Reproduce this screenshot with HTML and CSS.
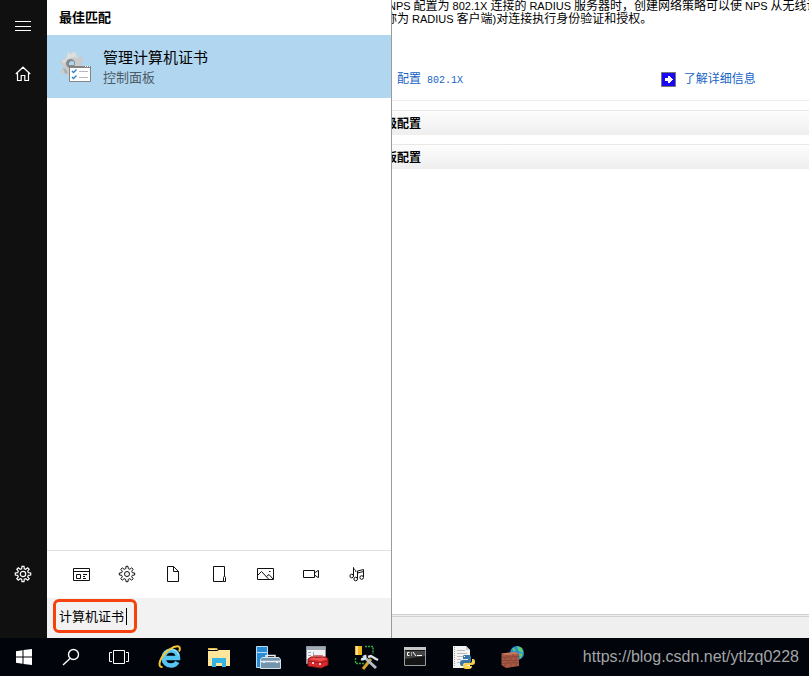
FILE: index.html
```html
<!DOCTYPE html>
<html lang="zh-CN">
<head>
<meta charset="utf-8">
<title>计算机证书</title>
<link rel="stylesheet" href="styles.css">
</head>
<body>
<div class="desktop">
  <section class="start" aria-label="搜索">
    <nav class="rail">
      <button type="button" aria-label="菜单"><svg width="16" height="16" viewBox="0 0 16 16"><path d="M0 3.500h16M0 8.500h16M0 12.500h16"/></svg></button>
      <button type="button" aria-label="主页"><svg width="16" height="16" viewBox="0 0 16 16"><path d="M.8 8 8 1.200 15.200 8M2.500 7v7.500h3.700V9.500h3.600v5h3.700V7"/></svg></button>
      <button type="button" class="settings" aria-label="设置"><svg width="18" height="18" viewBox="0 0 18 18"><path d="M7.7 3.700 8 1.300h2l.3 2.400 1.500.6 1.900-1.500 1.500 1.500-1.500 1.900.6 1.500 2.400.3v2l-2.400.3-.6 1.500 1.500 1.900-1.500 1.500-1.900-1.500-1.500.6-.3 2.400H8l-.3-2.400-1.500-.6-1.900 1.500-1.500-1.500 1.500-1.900-.6-1.500-2.400-.3V8l2.400-.3.6-1.500-1.500-1.900 1.500-1.500 1.900 1.500z"/><circle cx="9" cy="9" r="2.700"/></svg></button>
    </nav>
    <div class="panel">
      <h2>最佳匹配</h2>
      <a class="result" href="#">
        <svg width="32" height="32" viewBox="0 0 32 32">
          <path fill="#c9cbcd" d="m8 1 3 2 2-2 3 1 .5 3 3 1.500 3-.5 1 3-2 2.500.5 3 2.500 2-1.500 3-3 .5-2 2.500-10 2-3-2-3 .5-1.500-3L3 17l-.5-3L0 12l1.500-3 3-.5L6.500 6z"/>
          <path fill="#dcdddd" d="m8 1 3 2 2-2 3 1 .5 3 2 2-5-1-5 2-2 3-4 1 0-3 3-.5L6.500 6z"/>
          <path fill="#acafb2" d="M3 17l3 1 2 4-3 .5zM14 21l8-4-1 5z"/>
          <circle cx="10.500" cy="12.500" r="4.500" fill="#85898d"/><path fill="#b1d6f0" d="M9 14a3 3 0 0 1 5-3v3H9z"/>
          <path fill="#fff" stroke="#858585" d="M9.500 15.500h21v15h-21z"/><path stroke="#858585" stroke-width="2" d="M9 16h22"/><path stroke="#fff" d="M25 15.500h1m1 0h1m1 0h1"/>
          <path fill="none" stroke="#3183c8" stroke-width="1.400" d="m12 20 1.500 1.500 3-3M12 26l1.500 1.500 3-3"/>
          <path stroke="#b8b8b8" d="M19 20.500h9M19 26.500h9"/>
        </svg>
        <span class="result-text"><strong>管理计算机证书</strong><small>控制面板</small></span>
      </a>
      <div class="filters">
        <button type="button" aria-label="应用"><svg width="17" height="16" viewBox="0 0 17 16"><path d="M.5 2.500h16v12H.5zM.5 5.500h16M3.500 8.500h4v4h-4zM10 8.500h4M10 10.500h2M10 12.500h3"/></svg></button>
        <button type="button" aria-label="设置"><svg width="18" height="18" viewBox="0 0 18 18"><path d="M7.7 3.700 8 1.300h2l.3 2.400 1.500.6 1.900-1.500 1.500 1.500-1.500 1.900.6 1.500 2.400.3v2l-2.400.3-.6 1.500 1.500 1.900-1.500 1.500-1.900-1.500-1.500.6-.3 2.400H8l-.3-2.400-1.500-.6-1.900 1.500-1.500-1.500 1.500-1.900-.6-1.500-2.400-.3V8l2.400-.3.6-1.500-1.500-1.900 1.500-1.500 1.900 1.500z"/><circle cx="9" cy="9" r="2.500"/></svg></button>
        <button type="button" aria-label="文档"><svg width="14" height="16" viewBox="0 0 14 16"><path d="M1.500.5h6l5 5v10h-11zM7.500.5v5h5"/></svg></button>
        <button type="button" aria-label="文件夹"><svg width="14" height="16" viewBox="0 0 14 16"><path d="M12.500 10V.5H1.500v15h10M11.500 15.500v-4l1-1.500 1 1.500v4z"/></svg></button>
        <button type="button" aria-label="照片"><svg width="17" height="14" viewBox="0 0 17 14"><path d="M.5 1.500h16v11H.5zM.5 8.500l4-4 7.500 8M9.500 9.500 12 7.500l4 4.500M12 4.500h1.500"/></svg></button>
        <button type="button" aria-label="视频"><svg width="18" height="12" viewBox="0 0 18 12"><path d="M1.500 2.500h11v7h-11zM12.500 5l3.500-2.500h.5v7H16L12.500 7"/></svg></button>
        <button type="button" aria-label="音乐"><svg width="16" height="16" viewBox="0 0 16 16"><path d="M4.500 10V1.500c0 2 2.500 2 2.500 4.500M8.500 13V5l6-1.500V11M8.500 7l6-1.500"/><circle cx="2.700" cy="10" r="1.800"/><circle cx="6.700" cy="13" r="1.800"/><circle cx="12.700" cy="11.500" r="1.800"/></svg></button>
      </div>
      <div class="search">
        <label class="search-box"><input type="text" aria-label="搜索" value="计算机证书"><span class="caret"></span></label>
      </div>
    </div>
  </section>

  <main class="console">
    <p>将 <span>NPS</span> 配置为 <span>802.1X</span> 连接的 <span>RADIUS</span> 服务器时，创建网络策略可以使 <span>NPS</span> 从无线访<br>也称为 <span>RADIUS</span> 客户端<span>)</span>对连接执行身份验证和授权。</p>
    <div class="links">
      <a href="#">配置<span class="mono"> 802.1X</span></a>
      <a class="more" href="#"><svg width="15" height="15" viewBox="0 0 15 15"><path fill="#1808f4" stroke="#777" d="M.5.5h14v14H.5z"/><path fill="#fff" d="M4 6h3V4h2v1h1v1h1v1h1v1h-1v1h-1v1H9v1H7V9H4z"/></svg>了解详细信息</a>
    </div>
    <h3>高级配置</h3>
    <h3>模板配置</h3>
    <div class="status"></div>
  </main>
</div>

<footer class="taskbar">
  <button type="button" class="system" aria-label="开始"><svg width="16" height="16" viewBox="0 0 16 16"><path fill="#fff" d="M0 2.200 6.500 1.300V7.500H0zM7.500 1.100 16 0v7.500H7.500zM0 8.500h6.500v6.200L0 13.800zM7.500 8.500H16V16l-8.500-1.100z"/></svg></button>
  <button type="button" class="system" aria-label="搜索"><svg width="18" height="18" viewBox="0 0 18 18"><g fill="none" stroke="#fff" stroke-width="1.400"><circle cx="11.500" cy="6.500" r="5"/><path d="m8 10.500-7 6.500"/></g></svg></button>
  <button type="button" class="system" aria-label="任务视图"><svg width="20" height="16" viewBox="0 0 20 16"><path fill="none" stroke="#fff" d="M4.500 1.500h11v13h-11zM3 3.500H.5v9H3M17 3.500h2.500v9H17"/></svg></button>
  <div class="apps">
    <button type="button" aria-label="Internet Explorer"><svg width="24" height="24" viewBox="0 0 24 24"><path fill="none" stroke="#55c6f3" stroke-width="4.500" d="M5.500 13H20c0-5-3-7.500-7-7.500s-7.500 3-7.500 7.500 3.200 7.500 7.500 7.500c3 0 5-1 6.300-3.500"/><path fill="none" stroke="#b9eafc" d="M5 11c1-4 4-6.500 8-6.500s7 2 7.500 6"/><path fill="none" stroke="#f5c52b" stroke-width="2" d="M4.500 22C1 22.500.5 18 3.500 13 7.500 6 16 .5 20.500 1.500c2 .5 1.500 3 .5 5"/></svg></button>
    <button type="button" aria-label="文件资源管理器"><svg width="24" height="24" viewBox="0 0 24 24"><path fill="#e8b84b" d="M1 3h9l1 2H1z"/><path fill="#ffe69a" d="M1 6h9l2-1h11v16H1z"/><path fill="#fff2c7" d="M3 4h5v1H3z"/><path fill="#36b5e5" d="M5 13h14v9h-4v-4H9v4H5z"/></svg></button>
    <button type="button" aria-label="服务器管理器"><svg width="26" height="26" viewBox="0 0 26 26"><path fill="#278bd5" stroke="#b8dcf3" d="M1.500 2.500h11v21h-11z"/><path stroke="#b8dcf3" d="M2 8.500h10"/><path fill="#7495ae" stroke="#d5e0e7" d="M5.500 15.500 7 13.500h17l1.500 2v9h-20z"/><path fill="none" stroke="#e7edf1" stroke-width="1.500" d="M11 13.500v-2h9v2M6 17.500h19"/><path fill="#e7edf1" d="M8 17h2v2H8zm13 0h2v2h-2z"/></svg></button>
    <button type="button" aria-label="管理工具"><svg width="24" height="24" viewBox="0 0 24 24"><path fill="#f0f2f4" stroke="#8b969e" d="M1.500 1.500h19v17h-19z"/><path fill="#9eabb5" d="M2 2h18v3H2zM3 7h3v1H3zm0 3h3v1H3zm5-3h1v8H8z"/><path fill="#d92b2d" stroke="#8c171a" d="m3 14 3-2h15l2 2v6l-7 3-13-2z"/><path fill="#ef5551" d="m4 14 3-1h13l2 1-6 2z"/><path fill="none" stroke="#c94a4a" stroke-width="1.500" d="M9 13v-2h8v2"/><path fill="none" stroke="#921e20" d="m3 16 12 2 8-2"/><path stroke="#fff" stroke-width="1.500" d="M8 17v2m7-1v2"/></svg></button>
    <button type="button" aria-label="服务器工具"><svg width="26" height="26" viewBox="0 0 26 26"><path fill="#eeb51f" d="M2 2h7v9H2z"/><path fill="#ffe08b" d="M3 2h2v9H3z"/><path fill="none" stroke="#32a83a" stroke-width="1.500" stroke-dasharray="2 1" d="M12 2.500h8V10M2.500 14v5.500H11"/><path stroke="#d6a12e" stroke-width="3" d="m10 25 8-10"/><path stroke="#b3becb" stroke-width="3" d="m10 12 13 12"/><path fill="none" stroke="#dce5ed" stroke-width="2.500" d="M8 15c3 1 5-1 4-4M15 13l3-1 5 3 2 1"/></svg></button>
    <button type="button" aria-label="命令提示符"><svg width="24" height="24" viewBox="0 0 24 24"><path fill="#151515" stroke="#9b9b9b" d="M1.500 2.500h21v18h-21z"/><path fill="#c7c7c7" d="M1 2h22v3H1z"/><path fill="#444" d="M2 6h20v5L2 14z"/><path fill="none" stroke="#fff" d="M6.500 7.500h-2v3h2M8 8h1m-1 2h1m1-3 3 4m1-.5h5"/></svg></button>
    <button type="button" aria-label="Python"><svg width="24" height="24" viewBox="0 0 24 24"><path fill="#f3f3f3" d="M1 1h13l4 4v18H1z"/><path fill="#ccc" d="M14 1v4h4z"/><path stroke="#999" stroke-dasharray="1 1" d="M2.500 2v20"/><path stroke="#bbb" d="M5 5.500h8M5 8.500h10M5 11.500h6M5 14.500h4M5 17.500h3"/><path fill="#3976a8" d="M12 10h5q2 0 2 2v4q0 2-2 2h-4q-2 0-2 3h-1q-2 0-2-3t3-3h5v-1h-5v-2q0-2 1-2z"/><path fill="#ffd24b" d="M20 14h1q2 0 2 3t-3 3h-5v1h5q0 3-3 3h-3q-3 0-3-3t3-3h4q2 0 2-2z"/><path fill="#fff" d="M12 11h1v1h-1zm6 11h1v1h-1z"/></svg></button>
    <button type="button" aria-label="防火墙"><svg width="24" height="24" viewBox="0 0 24 24"><circle cx="16" cy="8" r="7" fill="#278ed5"/><path fill="#60c96c" d="m16 1 5 2 1 5-3-1-2-2zM11 3l4 1-2 3zM18 8l4 1-3 5z"/><path fill="#a95643" d="M.5 8.500 14 7l4 2v12L5 23l-4.500-3z"/><path fill="#c57862" d="M.5 8.500 14 7l4 2-13 1z"/><path fill="none" stroke="#86493a" d="m1 12.500 17-1M1 15.500h17M1 18.500l17-1M6 10v2m6-3v3M4 13v2m6-2v2m5-3v3M7 16v2m6-2v2M4 19v3m6-3v3m5-4v3"/></svg></button>
  </div>
  <span class="address">https://blog.csdn.net/ytlzq0228</span>
</footer>
</body>
</html>
```
FILE: styles.css
```css
* { box-sizing: border-box; }

body {
  margin: 0;
  height: 100vh;
  display: flex;
  flex-direction: column;
  overflow: hidden;
  background: #fff;
  color: #000;
  font: 12px/13px "Liberation Sans", "Noto Sans CJK SC", sans-serif;
}

button {
  display: flex;
  align-items: center;
  justify-content: center;
  padding: 0;
  border: 0;
  background: none;
}

svg { display: block; flex: none; }
a { color: #1763c6; text-decoration: none; }
h2, h3, p { margin: 0; }

.desktop { flex: 1; display: flex; min-height: 0; }

.start {
  display: flex;
  flex: none;
  position: relative;
  z-index: 1;
  border-right: 1px solid #9b9b9b;
  background: #fff;
}

.rail {
  width: 47px;
  display: flex;
  flex-direction: column;
  padding: 2px 0 40px;
  background: #101010;
}
.rail button { height: 48px; width: 46px; }
.rail .settings { margin-top: auto; }
.rail svg { fill: none; stroke: #fff; stroke-width: 1.2; }

.panel { width: 344px; display: flex; flex-direction: column; }
.panel h2 { padding-left: 12px; font-size: 13px; line-height: 35px; }

.result {
  display: flex;
  align-items: center;
  gap: 11px;
  height: 63px;
  padding-left: 13px;
  background: #b1d6f0;
  color: #000;
}
.result-text { display: flex; flex-direction: column; padding-top: 2px; line-height: 20px; }
.result strong { font-size: 15px; font-weight: 400; }
.result small { font-size: 13px; color: #4d5b66; }

.filters {
  display: flex;
  height: 48px;
  margin-top: auto;
  padding: 0 0 2px 11px;
  border-top: 1px solid #e0e0e0;
}
.filters button { width: 46px; }
.filters svg { fill: none; stroke: #111; }

.search { height: 40px; padding: 1px 6px 6px; background: #f2f2f2; }
.search-box {
  position: relative;
  display: block;
  width: 84px;
  height: 34px;
  border: 3px solid #f5420f;
  border-radius: 6px;
}
.search-box input {
  display: block;
  width: 100%;
  height: 26px;
  padding: 0 3px;
  border: 0;
  outline: 0;
  background: none;
  color: #000;
  font: 13px "Liberation Sans", "Noto Sans CJK SC", sans-serif;
}
.caret { position: absolute; right: 7px; top: 6px; width: 1px; height: 17px; background: #000; }

.console {
  flex: 1;
  min-width: 0;
  display: flex;
  flex-direction: column;
  margin-left: -19px;
  overflow: hidden;
}
.console p { font-family: Roboto, "Noto Sans CJK SC", sans-serif; white-space: nowrap; }
.console p span { font-family: "Liberation Sans", sans-serif; font-size: 11px; }
.links {
  display: grid;
  grid-template-columns: 64% 1fr;
  align-items: center;
  height: 75px;
  padding: 32px 0 0 24px;
  margin-bottom: 9px;
  border-bottom: 1px solid #ececec;
}
.mono { font: 10px "Liberation Mono", monospace; }
.more { display: flex; align-items: center; gap: 8px; }
.console h3 {
  height: 25px;
  margin-bottom: 9px;
  border-top: 1px solid #e8e8e8;
  background: linear-gradient(#fdfdfd, #eee);
  font-size: 12px;
  line-height: 26px;
}
.status {
  height: 24px;
  margin-top: auto;
  border-top: 3px double #d2d2d2;
  background: #efefef;
}

.taskbar {
  display: flex;
  align-items: stretch;
  height: 38px;
  background: #01040a;
}
.system { width: 48px; }
.system:first-child { width: 47px; }
.apps { display: flex; margin-left: 2px; }
.apps button { width: 49px; }
.address {
  margin: 0 10px 0 auto;
  color: #a2a4a7;
  font-size: 16px;
  line-height: 38px;
}
```
